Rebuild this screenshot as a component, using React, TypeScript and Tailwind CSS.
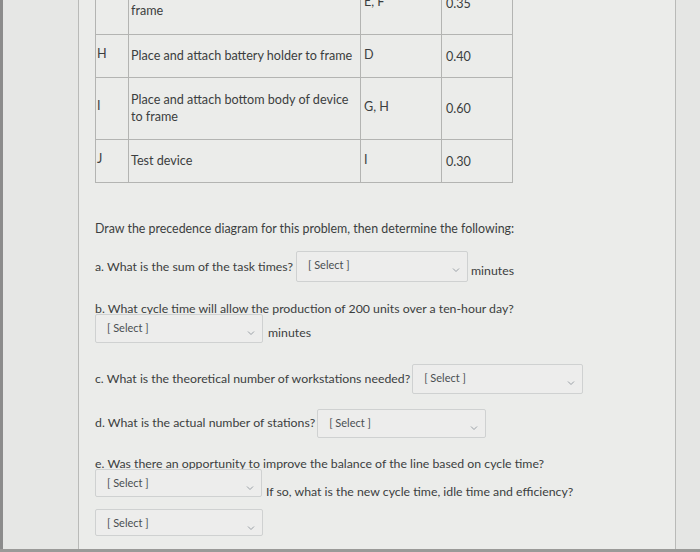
import React from "react";

const font = { fontFamily: "Lato, 'Open Sans', sans-serif" };

function Chevron() {
  return (
    <svg width="8" height="6" viewBox="0 0 8 6" className="shrink-0">
      <path d="M1 1.5 L4 4.5 L7 1.5" fill="none" stroke="#9aa0a6" strokeWidth="1" />
    </svg>
  );
}

function Select({ w, h = 30 }: { w: number; h?: number }) {
  return (
    <div
      className="flex items-start justify-between border border-[#cfd1d1] bg-[#ededec] rounded-[2px] pl-[11px] pr-[7px] pt-[6px] shrink-0"
      style={{ width: w, height: h }}
    >
      <span className="text-[11px] text-[#4a4f52] leading-[14px]">[ Select ]</span>
      <div className="pt-[9px]">
        <Chevron />
      </div>
    </div>
  );
}

const rows = [
  { id: "", desc: ["", "frame"], pred: "E, F", time: "0.35", h: 62 },
  { id: "H", desc: ["Place and attach battery holder to frame"], pred: "D", time: "0.40", h: 43 },
  { id: "I", desc: ["Place and attach bottom body of device", "to frame"], pred: "G, H", time: "0.60", h: 62 },
  { id: "J", desc: ["Test device"], pred: "I", time: "0.30", h: 43 },
];

export default function App() {
  return (
    <div
      className="w-[700px] h-[552px] overflow-hidden bg-[#e7e8e6] flex flex-col text-[#3b3e40]"
      style={font}
    >
      <div className="flex flex-1 min-h-0">
        <div className="w-[3px] bg-[#8c8c8c]" />
        <div className="w-[75px] bg-[#e6e7e5]" />
        <div className="w-[598px] border-l border-r border-[#b9bab8] bg-[#ebecea] pl-[16px] flex flex-col">
          <div className="mt-[-28px] w-[418px] border border-[#b3b4b2] border-t-0">
            {rows.map((r, i) => (
              <div
                key={i}
                className={`flex ${i > 0 ? "border-t border-[#b3b4b2]" : ""}`}
                style={{ height: r.h }}
              >
                <div className="w-[33px] border-r border-[#b3b4b2] flex items-center pl-[1px] pb-[4px] text-[12.6px]">
                  {r.id}
                </div>
                <div className="w-[232px] border-r border-[#b3b4b2] flex flex-col justify-center pl-[2px] pb-[2px] text-[12.6px] leading-[17px]">
                  {r.desc.map((d, j) => (
                    <div key={j}>{d || "\u00a0"}</div>
                  ))}
                </div>
                <div className="w-[81px] border-r border-[#b3b4b2] flex items-center pl-[3px] pb-[2px] text-[12.6px]">
                  {r.pred}
                </div>
                <div className="flex-1 flex items-center pl-[4px] pt-[2px] text-[12.6px]">{r.time}</div>
              </div>
            ))}
          </div>

          <div className="text-[12.4px] leading-[16px] mt-[38px]">
            Draw the precedence diagram for this problem, then determine the following:
          </div>

          <div className="flex items-start mt-[14px] text-[12.3px]">
            <span className="mt-[7px] mr-[3px]">a. What is the sum of the task times?</span>
            <Select w={172} h={31} />
            <span className="mt-[11px] ml-[3px]">minutes</span>
          </div>

          <div className="text-[12.3px] leading-[16px] mt-[19px]">
            b. What cycle time will allow the production of 200 units over a ten-hour day?
          </div>
          <div className="flex items-start mt-[-3px] text-[12.3px]">
            <Select w={168} h={29} />
            <span className="mt-[10px] ml-[5px]">minutes</span>
          </div>

          <div className="flex items-start mt-[21px] text-[12.3px]">
            <span className="mt-[6px] mr-[2px]">c. What is the theoretical number of workstations needed?</span>
            <Select w={171} h={30} />
          </div>

          <div className="flex items-start mt-[15px] text-[12.3px]">
            <span className="mt-[5px] mr-[2px]">d. What is the actual number of stations?</span>
            <Select w={169} h={29} />
          </div>

          <div className="text-[12.3px] leading-[16px] mt-[18px]">
            e. Was there an opportunity to improve the balance of the line based on cycle time?
          </div>
          <div className="flex items-start mt-[-3px] text-[12.3px]">
            <Select w={167} h={28} />
            <span className="mt-[14px] ml-[4px]">If so, what is the new cycle time, idle time and efficiency?</span>
          </div>
          <div className="mt-[8px]">
            <Select w={168} h={27} />
          </div>
        </div>
        <div className="flex-1 bg-[#e5e6e4]" />
      </div>
      <div className="h-[3px] bg-[#9a9a98]" />
    </div>
  );
}
